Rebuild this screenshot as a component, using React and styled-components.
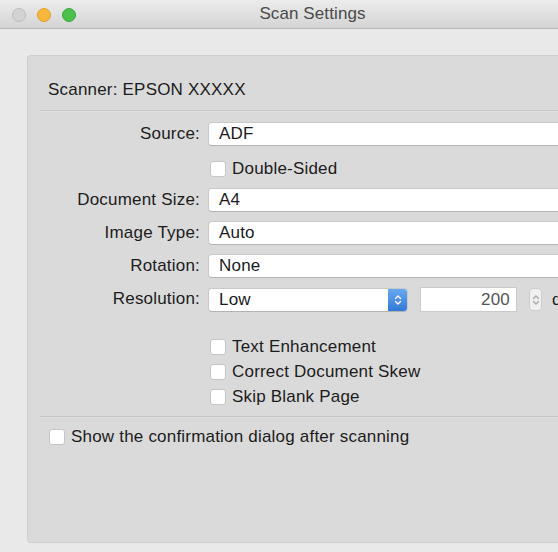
import styled, { createGlobalStyle } from 'styled-components'

const Global = createGlobalStyle`
    html, body {
        margin: 0;
        padding: 0;
        background: #e8e8e8;
    }
    body {
        font-family: "Liberation Sans", Arial, sans-serif;
        color: #1c1c1c;
        letter-spacing: 0.2px;
    }
    #root {
        width: 558px;
        height: 552px;
        overflow: hidden;
    }
`;

const Window = styled.div`
    width: 625px;
    height: 552px;
    background: #e9e9e9;
    display: flex;
    flex-direction: column;
`;

const TitleBar = styled.div`
    height: 28px;
    flex: none;
    display: flex;
    align-items: center;
    position: relative;
    background: linear-gradient(#ececec, #d4d4d4);
    border-bottom: 1px solid #b8b8b8;
`;

const Lights = styled.div`
    display: flex;
    gap: 11px;
    padding-left: 12px;
    padding-top: 2px;
`;

const Light = styled.span`
    width: 14px;
    height: 14px;
    border-radius: 50%;
    background: ${props => props.color};
    border: 0.5px solid ${props => props.edge};
    box-sizing: border-box;
`;

const Title = styled.div`
    position: absolute;
    left: 0;
    right: 0;
    text-align: center;
    font-size: 17px;
    letter-spacing: 0.1px;
    color: #4a4a4a;
`;

const Body = styled.div`
    flex: 1;
    padding: 26px 0 9px 27px;
    display: flex;
`;

const Panel = styled.div`
    flex: 1;
    background: #dadada;
    border: 1px solid #cecece;
    border-right: none;
    border-radius: 4px 0 0 4px;
    padding-top: 21px;
    display: flex;
    flex-direction: column;
`;

const Heading = styled.div`
    font-size: 17px;
    line-height: 26px;
    padding-left: 20px;
    margin-bottom: 7px;
`;

const Separator = styled.div`
    height: 1px;
    margin-left: 12px;
    background: #c4c4c4;
    box-shadow: 0 1px 0 #e2e2e2;
`;

const Form = styled.div`
    display: grid;
    grid-template-columns: 172px 1fr;
    column-gap: 8px;
    row-gap: 9px;
    padding-top: 11px;
`;

const Label = styled.div`
    font-size: 17px;
    height: 24px;
    line-height: 24px;
    text-align: right;
`;

const Popup = styled.div`
    height: 24px;
    width: ${props => props.width || 370}px;
    box-sizing: border-box;
    background: #fff;
    border: 1px solid #c9c9c9;
    border-bottom-color: #b3b3b3;
    border-radius: 4px;
    display: flex;
    align-items: center;
    font-size: 17px;
    padding-left: 10px;
    position: relative;
    overflow: hidden;
`;

const PopupArrow = styled.div`
    position: absolute;
    right: -1px;
    top: -1px;
    bottom: -1px;
    width: 20px;
    background: linear-gradient(#6aabf1, #2f77d6);
    border-radius: 0 4px 4px 0;
    display: flex;
    align-items: center;
    justify-content: center;
`;

const CheckRow = styled.label`
    height: 24px;
    box-sizing: border-box;
    display: flex;
    align-items: center;
    gap: 6px;
    font-size: 17px;
    padding-left: 2px;
    padding-top: ${props => props.shift || 0}px;
`;

const Box = styled.span`
    width: 16px;
    height: 16px;
    box-sizing: border-box;
    background: #fff;
    border: 1px solid #c6c6c6;
    border-radius: 3px;
    flex: none;
`;

const Spacer = styled.div``;

const ResRow = styled.div`
    display: flex;
    align-items: center;
`;

const NumberField = styled.div`
    margin-left: 12px;
    width: 97px;
    height: 25px;
    box-sizing: border-box;
    background: #fff;
    border: 1px solid #cacaca;
    font-size: 17px;
    color: #555;
    text-align: right;
    line-height: 23px;
    padding-right: 6px;
`;

const Stepper = styled.div`
    margin-left: 12px;
    width: 13px;
    height: 23px;
    box-sizing: border-box;
    background: #f0f0f0;
    border: 1px solid #cdcdcd;
    border-radius: 4px;
    display: flex;
    align-items: center;
    justify-content: center;
`;

const Unit = styled.span`
    margin-left: 10px;
    font-size: 17px;
`;

const Options = styled.div`
    display: flex;
    flex-direction: column;
    gap: 1px;
    padding: 23px 0 7px 180px;
`;

const Footer = styled.div`
    padding: 8px 0 0 19px;
`;

function Chevrons({ color, size = 12 }) {
    return (
        <svg width="8" height={size} viewBox="0 0 8 12" fill="none" stroke={color} strokeWidth="1.4" strokeLinecap="round" strokeLinejoin="round">
            <path d="M1.5 4.5 L4 2 L6.5 4.5" />
            <path d="M1.5 7.5 L4 10 L6.5 7.5" />
        </svg>
    )
}

const rows = [
    { label: 'Source:', value: 'ADF' },
    { check: 'Double-Sided' },
    { label: 'Document Size:', value: 'A4' },
    { label: 'Image Type:', value: 'Auto' },
    { label: 'Rotation:', value: 'None' },
];

const options = ['Text Enhancement', 'Correct Document Skew', 'Skip Blank Page'];

export default function App() {
    return (
        <Window>
            <Global />
            <TitleBar>
                <Lights>
                    <Light color="#d3d3d3" edge="#bdbdbd" />
                    <Light color="#f6b73c" edge="#e0a02a" />
                    <Light color="#4dc04b" edge="#3aa93a" />
                </Lights>
                <Title>Scan Settings</Title>
            </TitleBar>
            <Body>
                <Panel>
                    <Heading>Scanner: EPSON XXXXX</Heading>
                    <Separator />
                    <Form>
                        {rows.map((row, i) =>
                            row.check ? (
                                [<Spacer key={i + 'a'} />,
                                <CheckRow key={i} shift={4}><Box />{row.check}</CheckRow>]
                            ) : (
                                [<Label key={i + 'a'}>{row.label}</Label>,
                                <Popup key={i}>{row.value}<PopupArrow /></Popup>]
                            )
                        )}
                        <Label>Resolution:</Label>
                        <ResRow>
                            <Popup width={200}>
                                Low
                                <PopupArrow><Chevrons color="#fff" /></PopupArrow>
                            </Popup>
                            <NumberField>200</NumberField>
                            <Stepper><Chevrons color="#a8a8a8" size={14} /></Stepper>
                            <Unit>dpi</Unit>
                        </ResRow>
                    </Form>
                    <Options>
                        {options.map(o => (
                            <CheckRow key={o}><Box />{o}</CheckRow>
                        ))}
                    </Options>
                    <Separator />
                    <Footer>
                        <CheckRow>
                            <Box />Show the confirmation dialog after scanning
                        </CheckRow>
                    </Footer>
                </Panel>
            </Body>
        </Window>
    )
}
